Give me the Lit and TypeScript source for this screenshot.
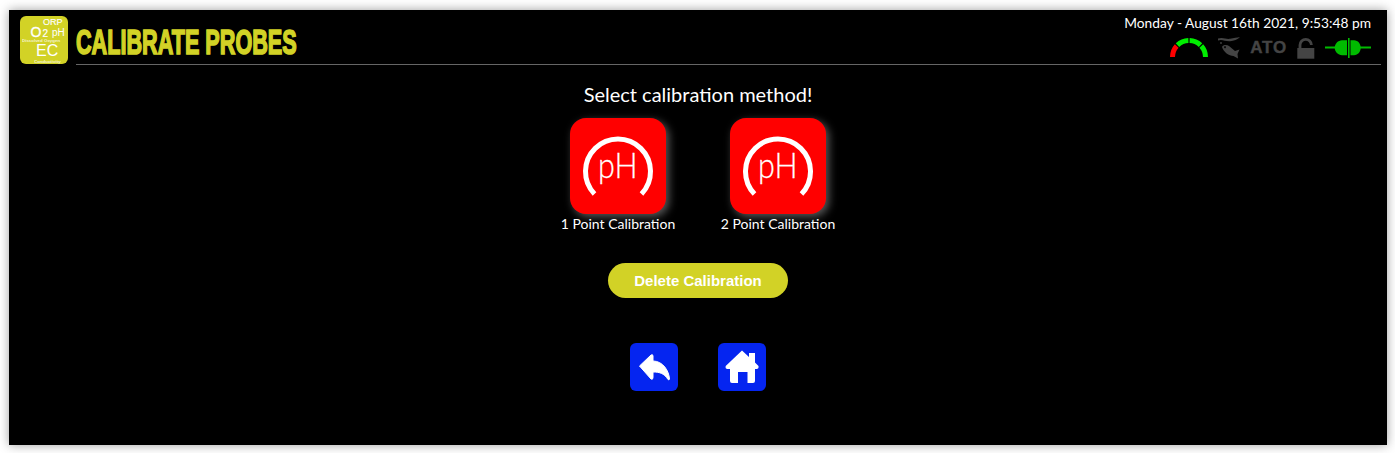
import { LitElement, html, css, svg } from "lit";
import { customElement } from "lit/decorators.js";

const phIcon = svg`<svg class="ph" viewBox="0 0 96 96" width="96" height="96" aria-hidden="true">
  <path d="M24.5 76 A32.5 32.5 0 1 1 71.5 76" fill="none" stroke="#fff" stroke-width="5"/>
  <text x="28" y="60" font-family="Lato" font-weight="300" font-size="36" fill="#fff" stroke="#fff" stroke-width=".3" textLength="39.5" lengthAdjust="spacingAndGlyphs">pH</text>
</svg>`;

@customElement("app-root")
export class AppRoot extends LitElement {
  static styles = css`
    :host { display: block; height: 453px; background: #fff; font-family: Lato, sans-serif; overflow: hidden; }
    .panel { margin: 10px 8px 0 9px; height: 435px; background: #000; color: #fff; box-shadow: 0 0 10px rgba(0,0,0,.38); box-sizing: border-box; padding: 4px 6px 0 11px; }
    header { display: flex; align-items: flex-start; gap: 8px; }
    .logo { display: block; flex: none; margin-top: 2px; }
    .hright { flex: 1; box-sizing: border-box; height: 51px; border-bottom: 1px solid #666; display: flex; justify-content: space-between; min-width: 0; }
    h1 { margin: 0; align-self: flex-end; color: #d2d226; font: bold 35px/36px "Liberation Sans", sans-serif; -webkit-text-stroke: 1.7px #d2d226; padding-bottom: 4px; white-space: nowrap; transform: scaleX(.618); transform-origin: left center; }
    .status { display: flex; flex-direction: column; align-items: flex-end; padding-right: 10px; }
    .date { font-size: 13.75px; line-height: 17px; white-space: nowrap; }
    .icons { display: flex; align-items: center; margin-top: 5px; height: 24px; }
    .icons svg { display: block; flex: none; }
    .fish { margin-left: 9px; }
    .plug { margin-left: 10px; }
    .ato { font: 900 17px/24px "Liberation Sans", sans-serif; color: #444; letter-spacing: .8px; -webkit-text-stroke: .4px #444; margin: 0 10px; }
    main { display: flex; flex-direction: column; align-items: center; margin-right: 5px; }
    h2 { margin: 17px 0 0; font-size: 20px; line-height: 24px; font-weight: 400; }
    .methods { display: flex; gap: 45px; margin-top: 12px; }
    .method { display: flex; flex-direction: column; align-items: center; width: 115px; }
    .tile { width: 96px; height: 96px; border-radius: 16px; background: #f00; box-shadow: 3px 3px 9px rgba(255,255,255,.35); }
    .ph { display: block; }
    .method span { font-size: 14px; line-height: 20px; white-space: nowrap; }
    .del { margin-top: 29px; width: 180px; height: 35px; border: 0; border-radius: 17.5px; background: #d2d226; color: #fff; font: bold 15px "Liberation Sans", sans-serif; padding: 0; }
    .nav { display: flex; gap: 40px; margin-top: 45px; }
    .nav div { width: 48px; height: 48px; border-radius: 6px; background: #0525f0; display: flex; align-items: center; justify-content: center; }
  `;

  render() {
    return html`<div class="panel">
      <header>
        <svg class="logo" width="48" height="48" viewBox="0 0 48 48" aria-hidden="true" font-family="Liberation Sans" fill="#fff">
          <rect width="48" height="48" rx="6" fill="#d2d226"/>
          <text x="23" y="8.5" font-size="9" stroke="#fff" stroke-width=".15">ORP</text>
          <text x="10.5" y="20.5" font-size="14" stroke="#fff" stroke-width=".3">O</text>
          <text x="22.5" y="21" font-size="10" stroke="#fff" stroke-width=".2">2</text>
          <text x="32" y="20" font-size="10">pH</text>
          <text x="2" y="25.5" font-size="4.4" font-weight="bold" opacity=".75">Dissolved Oxygen</text>
          <text x="16" y="40" font-size="16">EC</text>
          <text x="14" y="47" font-size="4.4" font-weight="bold" opacity=".8">Conductivity</text>
        </svg>
        <div class="hright">
          <h1>CALIBRATE PROBES</h1>
          <div class="status">
            <div class="date">Monday - August 16th 2021, 9:53:48 pm</div>
            <div class="icons">
              <svg width="38" height="24" viewBox="0 0 38 24" aria-hidden="true" fill="none" stroke-width="5">
                <path d="M2.5 21 A16.5 16.5 0 0 1 6.7 10" stroke="#f00"/>
                <path d="M7.5 9.1 A16.5 16.5 0 0 1 18.4 4.5" stroke="#0e0"/>
                <path d="M19.6 4.5 A16.5 16.5 0 0 1 30.5 9.1" stroke="#0e0"/>
                <path d="M31.3 10 A16.5 16.5 0 0 1 35.5 21" stroke="#0e0"/>
              </svg>
              <svg class="fish" width="23" height="24" viewBox="0 0 23 24" aria-hidden="true" fill="#444">
                <path d="M1 2.5 C6 .8 9 3.5 13 2.8 C17 2 20 1.5 23 1 C20.5 3.5 17 5 13 5.2 C8 5.5 5 2.8 1 4.5Z"/>
                <path fill-rule="evenodd" d="M5 11 C6 8.5 10 8.5 12 10 C14 11.5 16 13.5 18 15 L22.5 13.5 L20.5 18 L21 22.5 L16.5 20 C12 20 6.5 16 5 11Z M8 10.3 a.9 .9 0 1 0 .01 0Z"/>
                <circle cx="4" cy="7" r=".9"/>
              </svg>
              <span class="ato">ATO</span>
              <svg width="18" height="24" viewBox="0 0 18 24" aria-hidden="true">
                <rect x="0.3" y="12" width="17" height="10.7" fill="#444"/>
                <path d="M3 12.5 V9 A5.7 5.7 0 0 1 14.4 9" fill="none" stroke="#444" stroke-width="2.8"/>
              </svg>
              <svg class="plug" width="46" height="24" viewBox="0 0 46 24" aria-hidden="true" fill="#0b0">
                <rect x="0" y="10.5" width="10" height="2"/>
                <rect x="35" y="10.5" width="11" height="2"/>
                <path d="M22 4.3 V19.3 H17 C13 19.3 9.7 15.5 9.7 11.8 C9.7 8 13 4.3 17 4.3Z"/>
                <path d="M25.5 4.3 V19.3 H29 C33 19.3 35.7 15.5 35.7 11.8 C35.7 8 33 4.3 29 4.3Z"/>
                <rect x="23" y="2" width="1.6" height="20"/>
              </svg>
            </div>
          </div>
        </div>
      </header>
      <main>
        <h2>Select calibration method!</h2>
        <div class="methods">
          <div class="method"><div class="tile">${phIcon}</div><span>1 Point Calibration</span></div>
          <div class="method"><div class="tile">${phIcon}</div><span>2 Point Calibration</span></div>
        </div>
        <button class="del">Delete Calibration</button>
        <div class="nav">
          <div><svg width="32" height="32" viewBox="0 0 32 32" aria-hidden="true" fill="#fff"><path d="M1.5 15 L13 4 Q15 3 15 5 V10 C25 10 31 20 31.5 28 Q31 29.5 30 28.5 C26 22 21 21 15 21 V26.5 Q15 29 13 28 Z" stroke="#fff" stroke-linejoin="round"/></svg></div>
          <div><svg width="34" height="34" viewBox="0 0 34 34" aria-hidden="true" fill="#fff"><path d="M17 .5 L24 7 V3 H30 V12.5 L33.5 16 Q34 19 31.5 19 H30 V31 Q30 33 28 33 H22.5 V22 H13 V33 H7 Q5 33 5 31 V19 H2.5 Q0 19 .7 16 Z"/></svg></div>
        </div>
      </main>
    </div>`;
  }
}
